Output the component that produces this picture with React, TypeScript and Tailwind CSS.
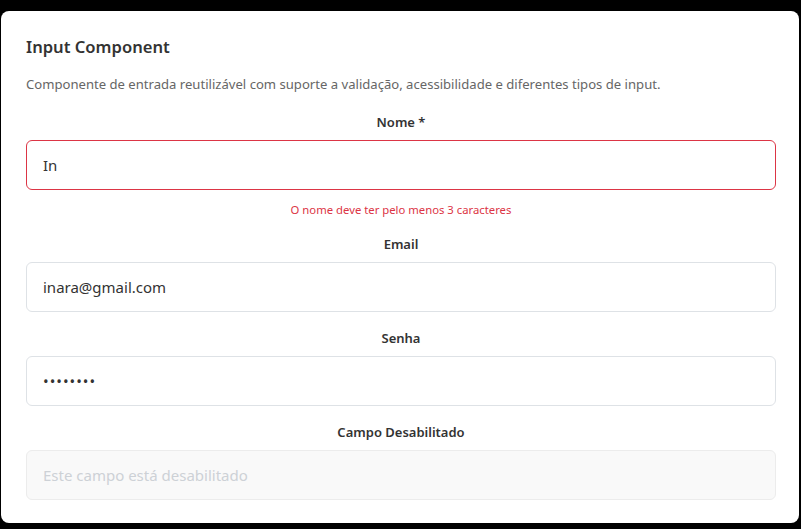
import React from "react";

const font = { fontFamily: '"Noto Sans", "Open Sans", sans-serif' };

function Field({
  label,
  children,
}: {
  label: string;
  children: React.ReactNode;
}) {
  return (
    <div className="flex flex-col">
      <label className="mb-2 h-5 text-center text-[13px] leading-5 font-semibold text-[#333333]">
        {label}
      </label>
      {children}
    </div>
  );
}

export default function App() {
  return (
    <div className="min-h-[529px] w-[801px] bg-black pt-[11px] pl-[1px]" style={font}>
      <div className="h-[512px] w-[798px] rounded-lg bg-white pr-[23px] pl-[25px] pt-[25px]">
        <h2 className="h-[22px] text-[16.6px] leading-[22px] font-semibold text-[#333333]">
          Input Component
        </h2>
        <p className="mt-4 h-5 text-[13.1px] leading-5 text-[#666666]">
          Componente de entrada reutilizável com suporte a validação, acessibilidade e diferentes tipos de input.
        </p>
        <div className="mt-[18px] flex flex-col gap-4">
          <div className="flex flex-col">
            <Field label="Nome *">
              <input
                readOnly
                value="In"
                className="h-[50px] w-full rounded-md border border-[#dc3545] bg-white px-4 text-[15px] text-[#333333] outline-none"
              />
            </Field>
            <div className="mt-3 h-4 text-center text-[11.3px] leading-4 text-[#dc3545]">
              O nome deve ter pelo menos 3 caracteres
            </div>
          </div>
          <Field label="Email">
            <input
              readOnly
              value="inara@gmail.com"
              className="h-[50px] w-full rounded-md border border-[#dee2e6] bg-white px-4 text-[15px] text-[#333333] outline-none"
            />
          </Field>
          <Field label="Senha">
            <input
              readOnly
              type="password"
              value="12345678"
              className="h-[50px] w-full rounded-md border border-[#dee2e6] bg-white px-4 text-[15px] tracking-[1px] text-[#333333] outline-none"
            />
          </Field>
          <Field label="Campo Desabilitado">
            <input
              disabled
              placeholder="Este campo está desabilitado"
              className="h-[50px] w-full rounded-md border border-[#ececec] bg-[#f9f9f9] px-4 text-[15px] text-[#333333] outline-none placeholder:text-[#cdd1d6]"
            />
          </Field>
        </div>
      </div>
    </div>
  );
}
